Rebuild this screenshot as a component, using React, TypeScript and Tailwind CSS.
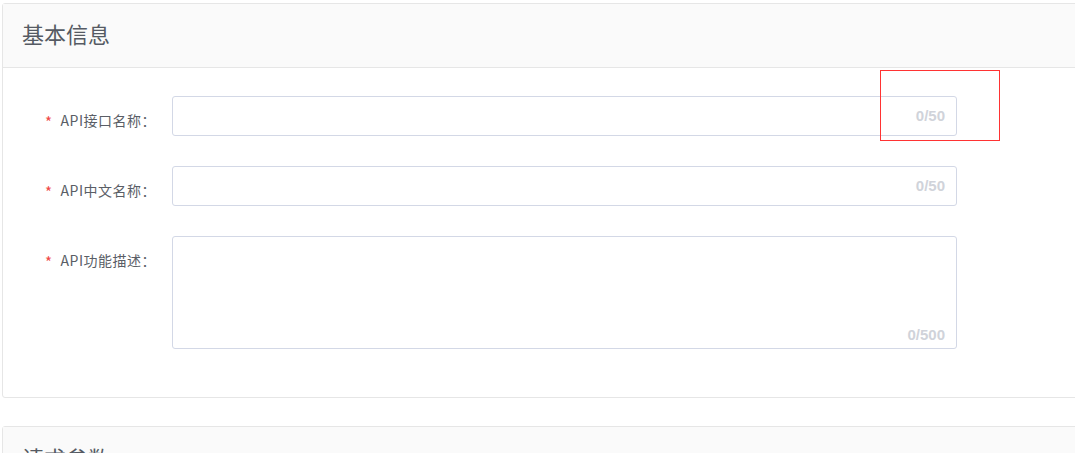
import React from "react";

const font = { fontFamily: '"Liberation Sans", "Noto Sans CJK SC", sans-serif' };
const cjk = { fontFamily: '"Noto Sans CJK SC", sans-serif' };

function Label({ text }: { text: string }) {
  return (
    <div
      className="w-[169px] shrink-0 pr-[16px] pt-[15px] text-right text-[14px] leading-[18px] tracking-[0.5px] text-[#5a5e66]"
      style={cjk}
    >
      <span className="relative top-[2px] mr-[8px] text-[15px] text-[#f04848]">*</span>
      {text}
    </div>
  );
}

function Field({ label, max }: { label: string; max: number }) {
  return (
    <div className="flex">
      <Label text={label} />
      <div className="flex h-[40px] w-[785px] items-center justify-end rounded-[3px] border border-[#d3d8e6] bg-white pr-[11px]">
        <span className="text-[15px] font-bold text-[#d0d3da]">0/{max}</span>
      </div>
    </div>
  );
}

export default function App() {
  return (
    <div className="relative h-[453px] w-[1075px] overflow-hidden bg-white" style={font}>
      <div className="pl-[2px] pt-[3px]">
        <div className="w-[1100px] rounded-[3px] border border-[#e6e6e6]">
          <div className="flex h-[64px] items-center border-b border-[#e6e6e6] bg-[#fafafa] pl-[19px] text-[22px] text-[#555a63]">
            基本信息
          </div>
          <div className="flex flex-col gap-[30px] pb-[48px] pt-[28px]">
            <Field label="API接口名称：" max={50} />
            <Field label="API中文名称：" max={50} />
            <div className="flex">
              <Label text="API功能描述：" />
              <div className="flex h-[113px] w-[785px] items-end justify-end rounded-[3px] border border-[#d3d8e6] bg-white pb-[2px] pr-[11px]">
                <span className="text-[15px] font-bold text-[#d0d3da]">0/500</span>
              </div>
            </div>
          </div>
        </div>
        <div className="mt-[28px] w-[1100px] rounded-[3px] border border-[#e6e6e6]">
          <div className="flex h-[64px] items-center bg-[#fafafa] pl-[19px] text-[22px] text-[#555a63]">
            请求参数
          </div>
        </div>
      </div>
      <div className="absolute left-[880px] top-[70px] h-[71px] w-[120px] border border-[#ff3333]" />
    </div>
  );
}
